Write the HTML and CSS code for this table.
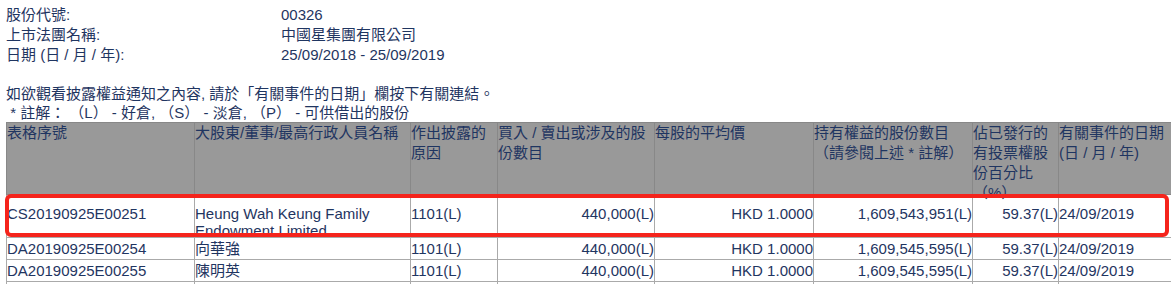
FILE: index.html
```html
<!DOCTYPE html>
<html lang="zh-Hant">
<head>
    <meta charset="UTF-8">
    <meta name="viewport" content="width=device-width, initial-scale=1.0">
    <title>披露權益</title>
    <link rel="stylesheet" href="styles.css">
</head>
<body>
    <div class="info">
        <div>股份代號:</div><div>00326</div>
        <div>上市法團名稱:</div><div>中國星集團有限公司</div>
        <div>日期 (日 / 月 / 年):</div><div>25/09/2018 - 25/09/2019</div>
    </div>

    <p class="hint">如欲觀看披露權益通知之內容, 請於「有關事件的日期」欄按下有關連結。</p>
    <p class="note">&nbsp;* 註解： （L） - 好倉, （S） - 淡倉, （P） - 可供借出的股份</p>

    <div class="table-wrap">
        <table class="notices">
            <colgroup>
                <col style="width:188px">
                <col style="width:216px">
                <col style="width:87px">
                <col style="width:157px">
                <col style="width:159px">
                <col style="width:159px">
                <col style="width:86px">
                <col style="width:114px">
            </colgroup>
            <thead>
                <tr>
                    <th><div class="head">表格序號</div></th>
                    <th><div class="head">大股東/董事/最高行政人員名稱</div></th>
                    <th><div class="head">作出披露的原因</div></th>
                    <th><div class="head">買入 / 賣出或涉及的股份數目</div></th>
                    <th><div class="head">每股的平均價</div></th>
                    <th><div class="head">持有權益的股份數目（請參閱上述 * 註解）</div></th>
                    <th><div class="head">佔已發行的有投票權股份百分比（%）</div></th>
                    <th><div class="head">有關事件的日期 (日 / 月 / 年)</div></th>
                </tr>
            </thead>
            <tbody>
                <tr class="first">
                    <td><div class="cell">CS20190925E00251</div></td>
                    <td><div class="cell">Heung Wah Keung Family Endowment Limited</div></td>
                    <td><div class="cell">1101(L)</div></td>
                    <td class="num"><div class="cell">440,000(L)</div></td>
                    <td class="num"><div class="cell">HKD 1.0000</div></td>
                    <td class="num"><div class="cell">1,609,543,951(L)</div></td>
                    <td class="num"><div class="cell">59.37(L)</div></td>
                    <td><div class="cell">24/09/2019</div></td>
                </tr>
                <tr>
                    <td>DA20190925E00254</td>
                    <td>向華強</td>
                    <td>1101(L)</td>
                    <td class="num">440,000(L)</td>
                    <td class="num">HKD 1.0000</td>
                    <td class="num">1,609,545,595(L)</td>
                    <td class="num">59.37(L)</td>
                    <td>24/09/2019</td>
                </tr>
                <tr>
                    <td>DA20190925E00255</td>
                    <td>陳明英</td>
                    <td>1101(L)</td>
                    <td class="num">440,000(L)</td>
                    <td class="num">HKD 1.0000</td>
                    <td class="num">1,609,545,595(L)</td>
                    <td class="num">59.37(L)</td>
                    <td>24/09/2019</td>
                </tr>
                <tr>
                    <td>&nbsp;</td>
                    <td>&nbsp;</td>
                    <td>&nbsp;</td>
                    <td>&nbsp;</td>
                    <td>&nbsp;</td>
                    <td>&nbsp;</td>
                    <td>&nbsp;</td>
                    <td>&nbsp;</td>
                </tr>
            </tbody>
        </table>
        <div class="highlight"></div>
    </div>
</body>
</html>
```

FILE: styles.css
```css
body {
    margin: 0;
    padding: 0 0 0 6px;
    font-family: "Liberation Sans", "Noto Sans CJK TC", sans-serif;
    font-size: 15px;
    color: #1f3561;
    background-color: #fff;
    overflow: hidden;
}

.info {
    display: grid;
    grid-template-columns: 275px 1fr;
    line-height: 20px;
    padding-top: 5px;
}

.hint {
    margin: 19px 0 0;
    line-height: 20px;
}

.note {
    margin: 0;
    line-height: 18px;
}

.table-wrap {
    position: relative;
    width: 1166px;
}

.notices {
    border-collapse: collapse;
    table-layout: fixed;
    width: 1166px;
}

.notices th {
    background-color: #999;
    border: 1px solid #888;
    font-weight: normal;
    text-align: left;
    vertical-align: top;
    padding: 0;
    line-height: 20px;
    color: #1f3561;
}

.notices .head {
    height: 71px;
}

.notices td {
    border: 1px solid #aaa;
    padding: 2px 0;
    line-height: 17px;
    vertical-align: top;
    text-align: left;
    white-space: nowrap;
}

.notices td.num {
    text-align: right;
}

.notices tr.first td {
    padding: 10px 0 0;
    white-space: normal;
}

.notices tr.first .cell {
    height: 32px;
}

.highlight {
    position: absolute;
    left: -1px;
    top: 72px;
    width: 1164px;
    height: 43px;
    box-sizing: border-box;
    border: 4px solid #f5241c;
    border-radius: 6px;
}
```
